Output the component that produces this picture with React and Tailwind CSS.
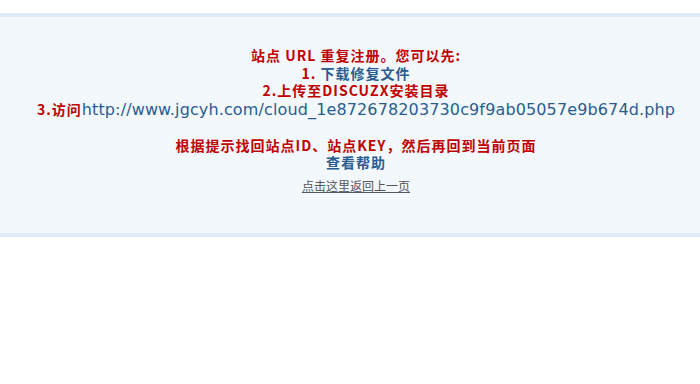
export default function App() {
  const cjk = { fontFamily: '"Noto Sans CJK SC", "Noto Sans", sans-serif' };
  return (
    <div className="w-[700px] h-[384px] bg-white overflow-hidden" style={cjk}>
      <div className="mt-[13px] border-y-4 border-[#dfebf6] bg-[#f2f8fc] h-[224px] pt-[29px] pl-[12px] flex flex-col items-center text-center">
        <div className="text-[14px] tracking-[1px] leading-[18px] font-bold text-[#c00000]">站点 URL 重复注册。您可以先:</div>
        <div className="text-[14px] tracking-[1px] leading-[18px] font-bold">
          <span className="text-[#c00000]">1. </span>
          <span className="text-[#2a5d8f]">下载修复文件</span>
        </div>
        <div className="text-[14px] tracking-[1px] leading-[17px] font-bold text-[#c00000]">2.上传至DISCUZX安装目录</div>
        <div className="leading-[18px] whitespace-nowrap">
          <span className="text-[14px] tracking-[1px] font-bold text-[#c00000]">3.访问</span>
          <span className="text-[16px] tracking-[0.13px] text-[#2a5d8f]" style={{ fontFamily: '"DejaVu Sans", Verdana, sans-serif' }}>http://www.jgcyh.com/cloud_1e872678203730c9f9ab05057e9b674d.php</span>
        </div>
        <div className="h-[17px]"></div>
        <div className="text-[14px] tracking-[1px] leading-[18px] font-bold text-[#c00000]">根据提示找回站点ID、站点KEY，然后再回到当前页面</div>
        <div className="text-[14px] tracking-[1px] leading-[16px] font-bold text-[#2a5d8f]">查看帮助</div>
        <div className="mt-[8px] text-[12px] leading-[16px] text-[#555] underline">点击这里返回上一页</div>
      </div>
    </div>
  );
}
